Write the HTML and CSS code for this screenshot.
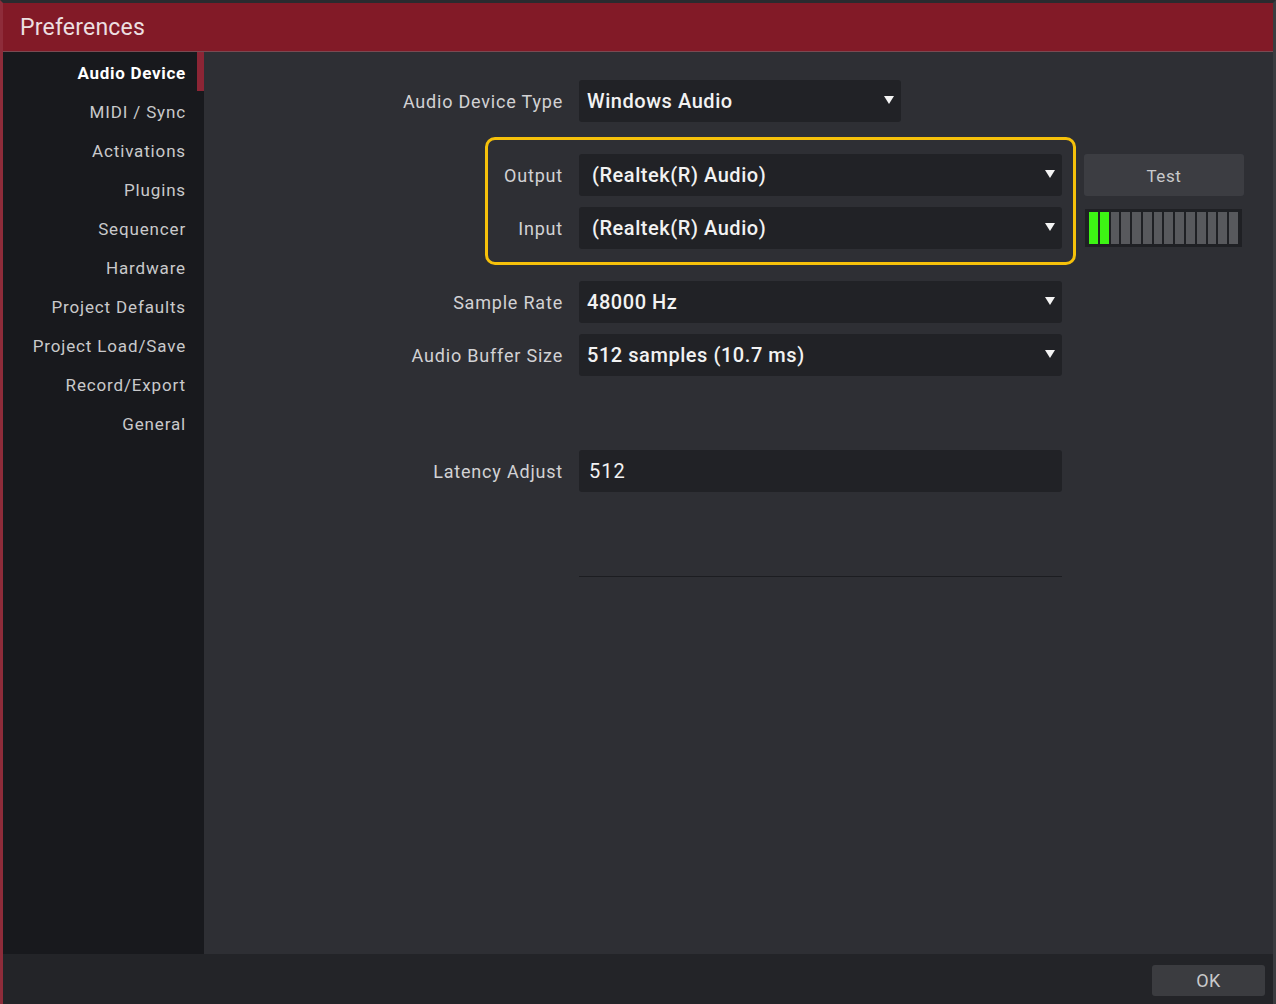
FILE: index.html
```
<!DOCTYPE html>
<html>
<head>
<meta charset="utf-8">
<title>Preferences</title>
<link rel="stylesheet" href="styles.css">
</head>
<body>
<div class="window">
  <div class="titlebar">Preferences</div>
  <div class="main">
    <nav class="sidebar">
      <div class="nav-item active">Audio Device</div>
      <div class="nav-item">MIDI / Sync</div>
      <div class="nav-item">Activations</div>
      <div class="nav-item">Plugins</div>
      <div class="nav-item">Sequencer</div>
      <div class="nav-item">Hardware</div>
      <div class="nav-item">Project Defaults</div>
      <div class="nav-item">Project Load/Save</div>
      <div class="nav-item">Record/Export</div>
      <div class="nav-item">General</div>
    </nav>
    <section class="content">
      <div class="row">
        <div class="label">Audio Device Type</div>
        <div class="select short"><span>Windows Audio</span><i class="arrow"></i></div>
      </div>
      <div class="group-row">
        <div class="highlight">
          <div class="row">
            <div class="label small">Output</div>
            <div class="select wide"><span class="pad">(Realtek(R) Audio)</span><i class="arrow"></i></div>
          </div>
          <div class="row">
            <div class="label small">Input</div>
            <div class="select wide"><span class="pad">(Realtek(R) Audio)</span><i class="arrow"></i></div>
          </div>
        </div>
        <div class="side">
          <div class="btn test">Test</div>
          <div class="meter">
            <i class="seg on"></i><i class="seg on"></i><i class="seg"></i><i class="seg"></i><i class="seg"></i><i class="seg"></i><i class="seg"></i><i class="seg"></i><i class="seg"></i><i class="seg"></i><i class="seg"></i><i class="seg"></i><i class="seg"></i><i class="seg"></i>
          </div>
        </div>
      </div>
      <div class="rows">
        <div class="row">
          <div class="label">Sample Rate</div>
          <div class="select wide"><span>48000 Hz</span><i class="arrow"></i></div>
        </div>
        <div class="row">
          <div class="label">Audio Buffer Size</div>
          <div class="select wide"><span>512 samples (10.7 ms)</span><i class="arrow"></i></div>
        </div>
      </div>
      <div class="row latency">
        <div class="label">Latency Adjust</div>
        <div class="select wide input"><span>512</span></div>
      </div>
      <div class="divider"></div>
    </section>
  </div>
  <div class="footer">
    <div class="btn ok">OK</div>
  </div>
</div>
</body>
</html>
```
FILE: styles.css
```
html, body {
  margin: 0;
  padding: 0;
}
body {
  background: #26272b;
  font-family: Roboto, "Noto Sans", "Liberation Sans", sans-serif;
  width: 1276px;
  height: 1004px;
  overflow: hidden;
}
.window {
  box-sizing: border-box;
  width: 1276px;
  height: 1004px;
  border-top: 3px solid #2a2b2f;
  border-left: 3px solid #8e2c3a;
  border-right: 3px solid #3b3c40;
  display: flex;
  flex-direction: column;
}
.titlebar {
  box-sizing: border-box;
  height: 49px;
  flex: none;
  background: #821a27;
  border-bottom: 1px solid #7a4a52;
  color: #ecdfe0;
  font-size: 23px;
  font-weight: 400;
  line-height: 48px;
  padding: 1px 0 0 17px;
  letter-spacing: 0.2px;
}
.main {
  display: flex;
  height: 902px;
  flex: none;
}
.sidebar {
  width: 201px;
  flex: none;
  background: #18191d;
  display: flex;
  flex-direction: column;
}
.nav-item {
  box-sizing: border-box;
  height: 39px;
  line-height: 43px;
  text-align: right;
  padding-right: 11px;
  border-right: 7px solid transparent;
  color: #c9c9cb;
  font-size: 17px;
  letter-spacing: 0.85px;
}
.nav-item.active {
  border-right-color: #8c2535;
  color: #ffffff;
  font-weight: 700;
  letter-spacing: 0.7px;
}
.content {
  flex: 1;
  background: #2e2f34;
  padding-top: 28px;
  box-sizing: border-box;
}
.row {
  display: flex;
  align-items: center;
  gap: 16px;
  height: 42px;
}
.label {
  width: 359px;
  flex: none;
  text-align: right;
  color: #d2d2d4;
  font-size: 18px;
  letter-spacing: 0.8px;
}
.label.small {
  width: 75px;
}
.select {
  box-sizing: border-box;
  height: 42px;
  background: #212226;
  border-radius: 3px;
  display: flex;
  align-items: center;
  justify-content: space-between;
  padding: 0 7px 0 8px;
  color: #f2f2f2;
  font-size: 20px;
  font-weight: 500;
  letter-spacing: 0.55px;
}
.select .pad {
  padding-left: 5px;
}
.select.short {
  width: 322px;
}
.select.wide {
  width: 483px;
}
.select.input {
  font-weight: 400;
  font-size: 20px;
  padding-left: 10px;
  letter-spacing: 1px;
}
.arrow {
  width: 0;
  height: 0;
  border-left: 5px solid transparent;
  border-right: 5px solid transparent;
  border-top: 8px solid #f4f4f4;
  margin-bottom: 2px;
}
.group-row {
  display: flex;
  align-items: flex-start;
  margin-top: 15px;
  padding-left: 281px;
}
.highlight {
  box-sizing: border-box;
  width: 591px;
  height: 128px;
  border: 3px solid #f6c10a;
  border-radius: 10px;
  padding: 14px 0 0 0;
  display: flex;
  flex-direction: column;
  gap: 11px;
}
.side {
  margin-left: 8px;
  padding-top: 17px;
  display: flex;
  flex-direction: column;
  gap: 13px;
}
.btn {
  background: #3c3d42;
  border-radius: 3px;
  color: #c9c9cb;
  display: flex;
  align-items: center;
  justify-content: center;
}
.btn.test {
  width: 160px;
  height: 42px;
  font-size: 17px;
  letter-spacing: 0.6px;
  padding-top: 1px;
  box-sizing: border-box;
}
.meter {
  box-sizing: border-box;
  width: 157px;
  height: 38px;
  margin-left: 1px;
  background: #1f2024;
  padding: 3px 4px;
  display: flex;
  gap: 2px;
}
.seg {
  flex: 1;
  background: #58595d;
}
.seg.on {
  background: #3df514;
}
.rows {
  margin-top: 16px;
  display: flex;
  flex-direction: column;
  gap: 11px;
}
.latency {
  margin-top: 74px;
}
.divider {
  margin-top: 84px;
  margin-left: 375px;
  width: 483px;
  height: 1px;
  background: #1c1d21;
}
.footer {
  height: 50px;
  flex: none;
  background: #232428;
  display: flex;
  justify-content: flex-end;
  align-items: flex-start;
  padding-right: 8px;
}
.btn.ok {
  margin-top: 11px;
  width: 113px;
  height: 31px;
  font-size: 18px;
  background: #3b3c40;
  letter-spacing: 0.5px;
}
```
